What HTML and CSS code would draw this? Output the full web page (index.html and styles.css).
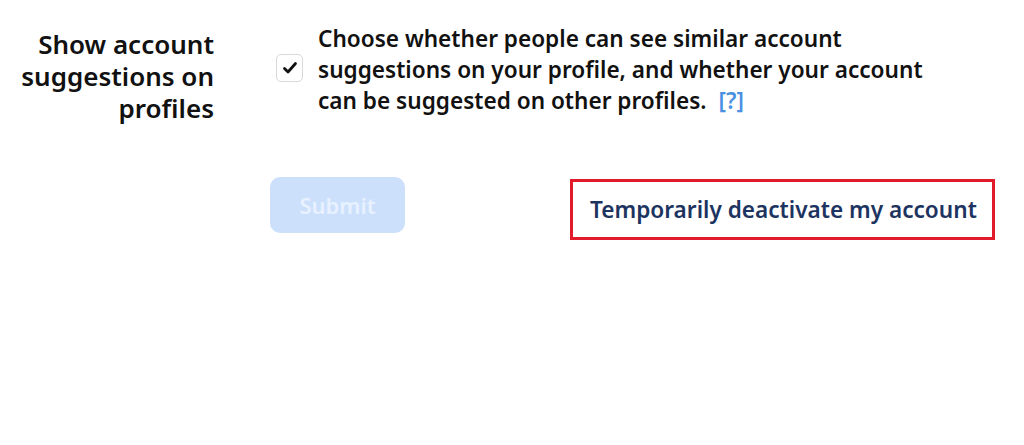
FILE: index.html
```html
<!DOCTYPE html>
<html lang="en">
<head>
    <meta charset="UTF-8">
    <meta name="viewport" content="width=device-width, initial-scale=1.0">
    <title>Account settings</title>
    <link rel="stylesheet" href="styles.css">
</head>
<body>
    <div class="settings">
        <div class="setting-row">
            <div class="setting-label">Show account suggestions on profiles</div>
            <div class="setting-field">
                <label class="check">
                    <input type="checkbox" checked>
                    <span class="check-box">
                        <svg width="18" height="18" viewBox="0 0 18 18"><path d="M3.5 9.5 L7 13 L14.5 4.5" fill="none" stroke="#111" stroke-width="2.8" stroke-linecap="round" stroke-linejoin="round"/></svg>
                    </span>
                </label>
                <p class="setting-text">Choose whether people can see similar account suggestions on your profile, and whether your account can be suggested on other profiles.<a href="#" class="help">[?]</a></p>
            </div>
        </div>
        <div class="actions">
            <button class="submit-btn" disabled>Submit</button>
            <a href="#" class="deactivate">Temporarily deactivate my account</a>
        </div>
    </div>
</body>
</html>
```

FILE: styles.css
```css
body {
    font-family: "Noto Sans", "Open Sans", sans-serif;
    background-color: #fff;
    color: #111;
    margin: 0;
    padding: 0;
}
.settings {
    padding-top: 23px;
}
.setting-row {
    display: grid;
    grid-template-columns: 214px 1fr;
    column-gap: 62px;
}
.setting-label {
    padding-top: 5px;
    text-align: right;
    font-size: 26px;
    font-weight: 600;
    line-height: 32px;
}
.setting-field {
    display: flex;
    align-items: flex-start;
    gap: 15px;
}
.check {
    margin-top: 31px;
    position: relative;
    cursor: pointer;
}
.check input {
    position: absolute;
    opacity: 0;
}
.check-box {
    display: flex;
    justify-content: center;
    align-items: center;
    width: 25px;
    height: 26px;
    border: 1px solid #d9d9d9;
    border-radius: 5px;
    background-color: #fff;
}
.setting-text {
    margin: 0;
    max-width: 625px;
    font-size: 22.6px;
    font-weight: 600;
    line-height: 31px;
}
.help {
    display: inline-block;
    color: #4a90e2;
    text-decoration: none;
    margin-left: 12px;
}
.actions {
    display: flex;
    align-items: flex-start;
    margin-top: 53px;
    padding-left: 270px;
}
.submit-btn {
    width: 135px;
    height: 56px;
    border: none;
    border-radius: 10px;
    background-color: #cce0fc;
    color: #e8f1ff;
    font-family: inherit;
    font-size: 22px;
    font-weight: 600;
}
.deactivate {
    margin-top: 2px;
    margin-left: 165px;
    padding: 12px 15px 12px 17px;
    border: 3px solid #e21b2b;
    color: #1d3461;
    font-size: 22.6px;
    font-weight: 600;
    text-decoration: none;
}
```
